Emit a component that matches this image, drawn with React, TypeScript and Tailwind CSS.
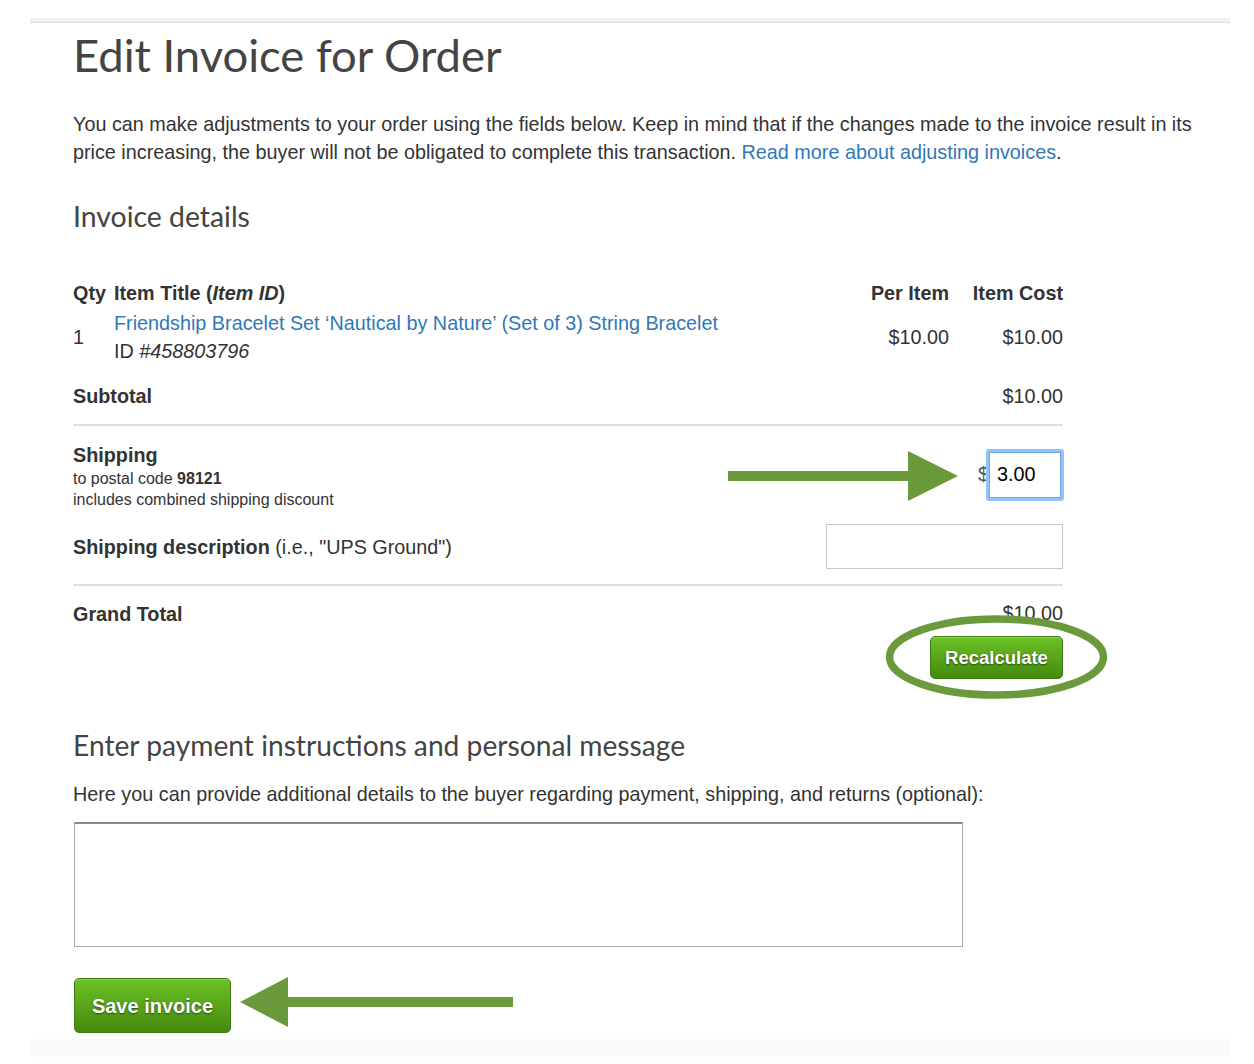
import React from "react";

const body = { fontFamily: '"Liberation Sans", Arial, sans-serif' };
const lato = { fontFamily: 'Lato, "Open Sans", sans-serif' };

function GreenButton({ label, className }: { label: string; className: string }) {
  return (
    <button
      className={
        "rounded-[5px] border border-[#3f7d10] bg-gradient-to-b from-[#6cc225] to-[#458a0e] font-bold text-white [text-shadow:0_1px_2px_rgba(0,0,0,0.55)] shadow-[inset_0_1px_0_rgba(255,255,255,0.25)] " +
        className
      }
    >
      {label}
    </button>
  );
}

export default function App() {
  return (
    <div className="relative min-h-[1064px] w-[1254px] bg-white pt-[18px] text-[#333]" style={body}>
      <div className="ml-[30px] w-[1200px]">
        <div className="h-[5px] border-b border-[#dadada] bg-[#f1f1f1]" />
        <div className="pl-[43px]">
          <h1 className="mt-[4px] text-[45.4px] leading-[56px] text-[#444]" style={lato}>
            Edit Invoice for Order
          </h1>
          <p className="mt-[27px] w-[1135px] text-[19.8px] leading-[28px]">
            You can make adjustments to your order using the fields below. Keep in mind that if the changes made to the
            invoice result in its price increasing, the buyer will not be obligated to complete this transaction.{" "}
            <span className="text-[#3178b5]">Read more about adjusting invoices</span>.
          </p>
          <h2 className="mt-[32px] text-[28.4px] leading-[36px] text-[#444]" style={lato}>
            Invoice details
          </h2>

          <div className="w-[990px] text-[19.8px]">
            <div className="mt-[45px] flex font-bold leading-[28px]">
              <div className="w-[41px]">Qty</div>
              <div className="flex-1">
                Item Title (<i>Item ID</i>)
              </div>
              <div className="w-[110px] text-right">Per Item</div>
              <div className="w-[114px] text-right">Item Cost</div>
            </div>
            <div className="mt-[2px] flex items-center leading-[28px]">
              <div className="w-[41px]">1</div>
              <div className="flex-1">
                <div className="text-[#3178b5]">Friendship Bracelet Set ‘Nautical by Nature’ (Set of 3) String Bracelet</div>
                <div>
                  ID <i>#458803796</i>
                </div>
              </div>
              <div className="w-[110px] text-right">$10.00</div>
              <div className="w-[114px] text-right">$10.00</div>
            </div>
            <div className="mt-[17px] flex justify-between leading-[28px]">
              <div className="font-bold">Subtotal</div>
              <div>$10.00</div>
            </div>
            <div className="mt-[14px] h-[2px] bg-[#dedede]" />

            <div className="mt-[16px] flex items-start justify-between">
              <div>
                <div className="font-bold leading-[26px]">Shipping</div>
                <div className="text-[16px] leading-[21px]">
                  to postal code <b>98121</b>
                </div>
                <div className="text-[16px] leading-[21px]">includes combined shipping discount</div>
              </div>
              <div className="mr-[-1px] mt-[7px] flex items-center">
                <span className="text-[19.8px] text-[#555]">$</span>
                <div className="ml-[-3px] flex h-[52px] w-[78px] items-center rounded-[3px] border-[3px] border-[#93c2f8] bg-white">
                  <div className="flex h-full w-full items-center border border-[#6fa6ec] pl-[7px] text-[19.8px] text-black">
                    3.00
                  </div>
                </div>
              </div>
            </div>

            <div className="mt-[14px] flex h-[45px] items-center justify-between">
              <div className="leading-[28px]">
                <b>Shipping description</b> (i.e., "UPS Ground")
              </div>
              <div className="h-[45px] w-[237px] border border-[#c8c8c8] bg-white" />
            </div>
            <div className="mt-[15px] h-[2px] bg-[#dedede]" />

            <div className="mt-[14px] flex justify-between leading-[28px]">
              <div className="font-bold">Grand Total</div>
              <div className="mt-[-1px]">$10.00</div>
            </div>
            <div className="mt-[8px] flex justify-end">
              <GreenButton label="Recalculate" className="h-[43px] w-[133px] text-[18.5px]" />
            </div>
          </div>

          <h2 className="mt-[48px] text-[28.2px] leading-[36px] text-[#444]" style={lato}>
            Enter payment instructions and personal message
          </h2>
          <p className="mt-[17px] text-[19.8px] leading-[28px]">
            Here you can provide additional details to the buyer regarding payment, shipping, and returns (optional):
          </p>
          <div className="ml-[1px] mt-[14px] h-[125px] w-[889px] border border-t-2 border-[#a9a9a9] border-t-[#8a8a8a] bg-white" />
          <div className="ml-[1px] mt-[31px]">
            <GreenButton label="Save invoice" className="h-[55px] w-[157px] text-[20px]" />
          </div>
        </div>
        <div className="mt-[6px] h-[18px] bg-[#fafafa]" />
      </div>

      {/* annotations */}
      <svg className="pointer-events-none absolute left-0 top-0" width="1254" height="1064" viewBox="0 0 1254 1064">
        <rect x="728" y="471" width="182" height="10" fill="#6a9a3b" />
        <polygon points="908,451 958,476 908,501" fill="#6a9a3b" />
        <ellipse cx="996.5" cy="657" rx="107" ry="38" fill="none" stroke="#6a9a3b" strokeWidth="7.5" />
        <polygon points="240,1002 288,977 288,1027" fill="#6a9a3b" />
        <rect x="286" y="997" width="227" height="10" fill="#6a9a3b" />
      </svg>
    </div>
  );
}
